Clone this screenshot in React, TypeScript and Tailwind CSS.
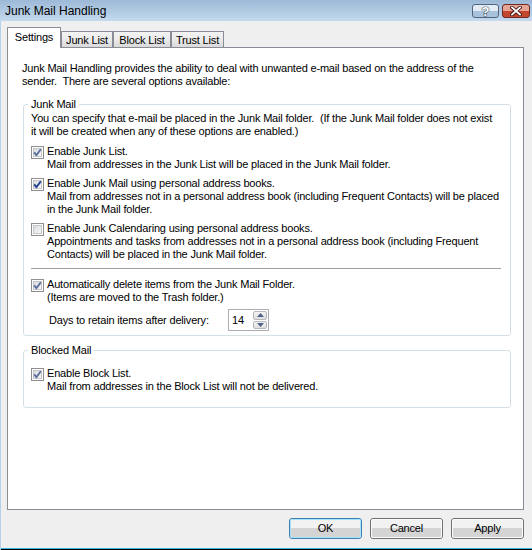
import React from "react";

// Vista-style "Junk Mail Handling" dialog
const FONT = "font-['Liberation_Sans',Arial,sans-serif]";

function CheckBox({ on, dark }: { on: boolean; dark?: boolean }) {
  return (
    <span className="relative mt-px flex h-[13px] w-[13px] shrink-0 items-center justify-center border border-[#8f8f8f] bg-white">
      <span className="h-[9px] w-[9px] border border-[#c4c6c9] bg-gradient-to-br from-[#d9dbde] to-[#f7f7f7]" />
      {on && (
        <svg className="absolute left-[-1px] top-[-1px]" width="13" height="13" viewBox="0 0 13 13">
          <path
            d="M3.2 6.4 L5.4 9.2 L9.8 3.2"
            fill="none"
            stroke={dark ? "#1f3f91" : "#5b6f9c"}
            strokeWidth="1.9"
            strokeLinejoin="round"
          />
        </svg>
      )}
    </span>
  );
}

function Option({
  on,
  dark,
  lines,
  className = "",
}: {
  on: boolean;
  dark?: boolean;
  lines: string[];
  className?: string;
}) {
  return (
    <div className={`flex gap-[3px] ${className}`}>
      <CheckBox on={on} dark={dark} />
      <div>
        {lines.map((l) => (
          <div key={l} className="h-[13px] whitespace-pre leading-[13px]">
            {l}
          </div>
        ))}
      </div>
    </div>
  );
}

function Group({ label, className = "", children }: { label: string; className?: string; children: React.ReactNode }) {
  return (
    <div className={`relative ml-[15px] w-[488px] rounded-[3px] border border-[#d5dfe5] ${className}`}>
      <span className="absolute -top-[7px] left-[4px] bg-white px-[3px] leading-[13px]">{label}</span>
      {children}
    </div>
  );
}

function Tab({ label, active, w }: { label: string; active?: boolean; w: string }) {
  if (active) {
    return (
      <div
        className={`relative z-10 -mb-px flex h-[21px] ${w} justify-center border-x border-t border-[#898c95] bg-white pt-[3px] leading-[13px]`}
      >
        {label}
      </div>
    );
  }
  return (
    <div
      className={`flex h-[16px] ${w} justify-center border-x border-t border-[#898c95] bg-gradient-to-b from-[#f3f3f3] via-[#ebebeb] to-[#d9d9d9] pt-[2px] leading-[13px]`}
    >
      {label}
    </div>
  );
}

function Button({ label, primary }: { label: string; primary?: boolean }) {
  return (
    <div
      className={`flex h-[21px] w-[73px] items-center justify-center rounded-[3px] border ${
        primary ? "border-[#3c7fb1]" : "border-[#707070]"
      }`}
    >
      <div
        className={`flex h-full w-full items-center justify-center rounded-[2px] border ${
          primary ? "border-[#a6e3f8]" : "border-[#fbfbfb]"
        } bg-gradient-to-b from-[#f2f2f2] from-50% to-[#d4d4d4] to-50%`}
      >
        {label}
      </div>
    </div>
  );
}

export default function App() {
  return (
    <div
      className={`flex h-[550px] w-[532px] flex-col overflow-hidden bg-[#efefef] text-[11px] tracking-[-0.18px] text-black ${FONT}`}
    >
      {/* title bar */}
      <div className="flex h-[21px] shrink-0 items-center justify-between bg-gradient-to-b from-[#9cb9d7] to-[#c4daef] pl-[5px] pr-[2px]">
        <span className="text-[12px] leading-[14px] tracking-normal text-black">Junk Mail Handling</span>
        <div className="flex gap-[3px] self-start pt-[4px]">
          <div className="flex h-[14px] w-[27px] items-center justify-center rounded-[3px] border border-[#52667d] bg-gradient-to-b from-[#e3ecf5] from-50% to-[#a9c2dc] to-50%">
            <span className="text-[13px] font-bold leading-none text-white [-webkit-text-stroke:1.2px_#4a5a6c] [paint-order:stroke_fill]">
              ?
            </span>
          </div>
          <div className="flex h-[14px] w-[28px] items-center justify-center rounded-[3px] border border-[#6e2a20] bg-gradient-to-b from-[#e7a598] from-50% to-[#c6452f] to-50%">
            <svg width="12" height="10" viewBox="0 0 12 10">
              <path d="M2 1.5 L10 8.5 M10 1.5 L2 8.5" stroke="#3b1109" strokeWidth="3.6" strokeLinecap="square" />
              <path d="M2 1.5 L10 8.5 M10 1.5 L2 8.5" stroke="#ffffff" strokeWidth="1.8" strokeLinecap="square" />
            </svg>
          </div>
        </div>
      </div>

      <div className="flex flex-1 flex-col border-l border-[#b7cfe8]">
        {/* tabs */}
        <div className="mt-[6px] flex h-[20px] items-end pl-[6px]">
          <Tab label="Settings" active w="w-[54px]" />
          <Tab label="Junk List" w="w-[52px]" />
          <Tab label="Block List" w="w-[58px]" />
          <Tab label="Trust List" w="w-[53px]" />
        </div>

        {/* panel */}
        <div className="ml-[6px] h-[463px] w-[517px] border border-[#898c95] bg-white pt-[14px]">
          <div className="pl-[14px]">
            <div className="h-[13px] whitespace-pre leading-[13px]">
              Junk Mail Handling provides the ability to deal with unwanted e-mail based on the address of the
            </div>
            <div className="h-[13px] whitespace-pre leading-[13px]">sender.  There are several options available:</div>
          </div>

          <Group label="Junk Mail" className="mt-[16px] pb-[4px] pl-[7px] pt-[7px]">
            <div className="whitespace-pre leading-[13px]">
              You can specify that e-mail be placed in the Junk Mail folder.  (If the Junk Mail folder does not exist
            </div>
            <div className="whitespace-pre leading-[13px]">it will be created when any of these options are enabled.)</div>

            <Option
              on
              className="mt-[7px]"
              lines={["Enable Junk List.", "Mail from addresses in the Junk List will be placed in the Junk Mail folder."]}
            />
            <Option
              on
              dark
              className="mt-[6px]"
              lines={[
                "Enable Junk Mail using personal address books.",
                "Mail from addresses not in a personal address book (including Frequent Contacts) will be placed",
                "in the Junk Mail folder.",
              ]}
            />
            <Option
              on={false}
              className="mt-[6px]"
              lines={[
                "Enable Junk Calendaring using personal address books.",
                "Appointments and tasks from addresses not in a personal address book (including Frequent",
                "Contacts) will be placed in the Junk Mail folder.",
              ]}
            />

            <div className="mr-[9px] mt-[7px] h-[2px] border-t border-[#a0a0a0] border-b-white" />

            <Option
              on
              className="mt-[8px]"
              lines={["Automatically delete items from the Junk Mail Folder.", "(Items are moved to the Trash folder.)"]}
            />

            <div className="mt-[5px] flex items-center pl-[18px]">
              <span className="w-[179px] whitespace-pre">Days to retain items after delivery:</span>
              <div className="flex h-[22px] w-[41px] border border-[#abadb3] bg-white">
                <span className="flex-1 pl-[3px] leading-[20px]">14</span>
                <div className="flex w-[15px] flex-col gap-px py-px pr-px">
                  <div className="flex flex-1 items-center justify-center rounded-[2px] border border-[#b5b8bd] bg-gradient-to-b from-[#f4f4f4] to-[#dedede]">
                    <svg width="7" height="4" viewBox="0 0 7 4">
                      <path d="M0 4 L3.5 0 L7 4 Z" fill="#4d6185" />
                    </svg>
                  </div>
                  <div className="flex flex-1 items-center justify-center rounded-[2px] border border-[#b5b8bd] bg-gradient-to-b from-[#f4f4f4] to-[#dedede]">
                    <svg width="7" height="4" viewBox="0 0 7 4">
                      <path d="M0 0 L7 0 L3.5 4 Z" fill="#4d6185" />
                    </svg>
                  </div>
                </div>
              </div>
            </div>
          </Group>

          <Group label="Blocked Mail" className="mt-[14px] pb-[14px] pl-[7px] pt-[16px]">
            <Option
              on
              lines={["Enable Block List.", "Mail from addresses in the Block List will not be delivered."]}
            />
          </Group>
        </div>

        {/* buttons */}
        <div className="mt-[8px] flex justify-end gap-[8px] pr-[8px]">
          <Button label="OK" primary />
          <Button label="Cancel" />
          <Button label="Apply" />
        </div>

        <div className="mt-auto h-px bg-[#35b3df]" />
        <div className="h-px bg-black" />
      </div>
    </div>
  );
}
